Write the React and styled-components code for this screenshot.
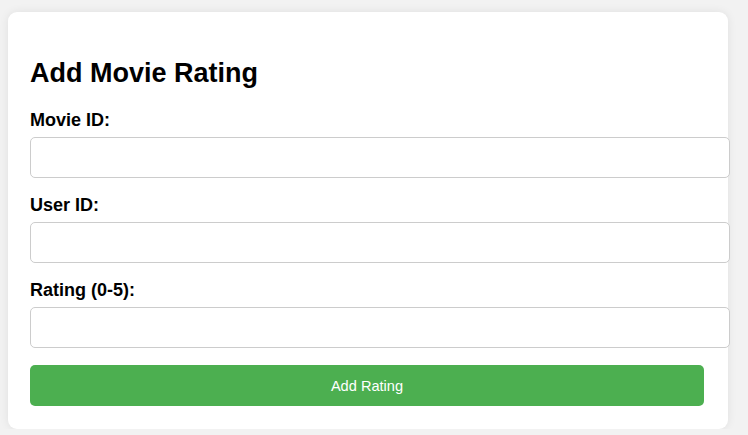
import styled, { createGlobalStyle } from "styled-components";

const GlobalStyle = createGlobalStyle`
  body {
    margin: 0;
    background-color: #f2f2f2;
    font-family: "Liberation Sans", Arial, sans-serif;
  }
`;

const Page = styled.div`
  padding: 12px 0 0 8px;
`;

const Card = styled.div`
  width: 720px;
  box-sizing: border-box;
  padding: 0 24px 23px 22px;
  background-color: #ffffff;
  border-radius: 9px;
  box-shadow: 0 0 10px rgba(0, 0, 0, 0.08);
`;

const Title = styled.h2`
  font-size: 27px;
  font-weight: 700;
  color: #000;
  margin: 0;
  padding: 46px 0 22px;
  line-height: 30px;
`;

const Form = styled.form`
  display: flex;
  flex-direction: column;
`;

const Field = styled.div`
  display: flex;
  flex-direction: column;
  margin-bottom: 17px;
`;

const Label = styled.label`
  font-size: 18px;
  font-weight: 700;
  color: #000;
  line-height: 20px;
  margin-bottom: 7px;
`;

const Input = styled.input`
  width: 700px;
  height: 41px;
  box-sizing: border-box;
  border: 1px solid #cccccc;
  border-radius: 5px;
  padding: 0 12px;
  font-size: 16px;
  font-family: inherit;
  background: #fff;
`;

const Button = styled.button`
  width: 100%;
  height: 41px;
  border: none;
  border-radius: 5px;
  background-color: #4caf50;
  color: #fff;
  font-family: inherit;
  font-size: 14.6px;
  cursor: pointer;
`;

const fields = [
  { id: "movieId", label: "Movie ID:" },
  { id: "userId", label: "User ID:" },
  { id: "rating", label: "Rating (0-5):" },
];

export default function App() {
  return (
    <>
      <GlobalStyle />
      <Page>
        <Card>
          <Title>Add Movie Rating</Title>
          <Form onSubmit={(e) => e.preventDefault()}>
            {fields.map(({ id, label }) => (
              <Field key={id}>
                <Label htmlFor={id}>{label}</Label>
                <Input id={id} type="text" />
              </Field>
            ))}
            <Button type="submit">Add Rating</Button>
          </Form>
        </Card>
      </Page>
    </>
  );
}
